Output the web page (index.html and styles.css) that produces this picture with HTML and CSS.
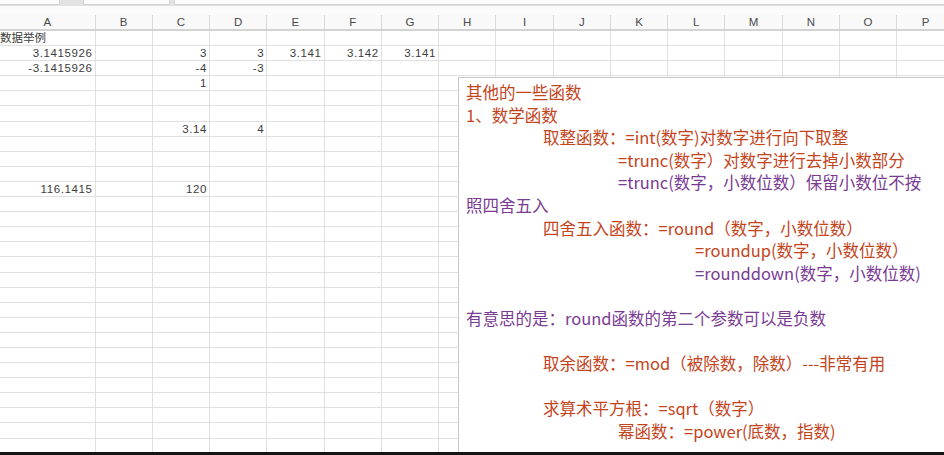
FILE: index.html
```html
<!DOCTYPE html>
<html lang="zh-CN">
<head>
<meta charset="utf-8">
<title>Sheet</title>
<link rel="stylesheet" href="styles.css">
</head>
<body>
<div class="app">
  <div class="tabs">
    <div class="tab tab-1"></div>
    <div class="tab tab-2"></div>
    <div class="tab tab-3"></div>
  </div>
  <div class="gap"></div>
  <div class="sheet-wrap">
    <table class="sheet">
      <colgroup>
        <col class="col-a">
        <col class="col"><col class="col"><col class="col"><col class="col"><col class="col">
        <col class="col"><col class="col"><col class="col"><col class="col"><col class="col">
        <col class="col"><col class="col"><col class="col"><col class="col"><col class="col">
      </colgroup>
      <thead>
        <tr>
          <th>A</th><th>B</th><th>C</th><th>D</th><th>E</th><th>F</th><th>G</th><th>H</th>
          <th>I</th><th>J</th><th>K</th><th>L</th><th>M</th><th>N</th><th>O</th><th>P</th>
        </tr>
      </thead>
      <tbody id="sheet-body"></tbody>
    </table>

    <div class="note">
      <div class="line red">其他的一些函数</div>
      <div class="line red">1、数学函数</div>
      <div class="line red ind-1">取整函数：=int(数字)对数字进行向下取整</div>
      <div class="line red ind-2">=trunc(数字）对数字进行去掉小数部分</div>
      <div class="line purple ind-2">=trunc(数字，小数位数）保留小数位不按</div>
      <div class="line purple">照四舍五入</div>
      <div class="line red ind-1">四舍五入函数：=round（数字，小数位数）</div>
      <div class="line red ind-3">=roundup(数字，小数位数）</div>
      <div class="line purple ind-3">=rounddown(数字，小数位数)</div>
      <div class="line"></div>
      <div class="line purple">有意思的是：round函数的第二个参数可以是负数</div>
      <div class="line"></div>
      <div class="line red ind-1">取余函数：=mod（被除数，除数）---非常有用</div>
      <div class="line"></div>
      <div class="line red ind-1">求算术平方根：=sqrt（数字）</div>
      <div class="line red ind-2">幂函数：=power(底数，指数)</div>
    </div>
  </div>
  <div class="bottom-bar"></div>
</div>
<script src="script.js"></script>
</body>
</html>
```

FILE: styles.css
```css
html, body {
  margin: 0;
  padding: 0;
  background: #ffffff;
}

body {
  width: 944px;
  height: 455px;
  overflow: hidden;
  font-family: "Liberation Sans", "Noto Sans CJK SC", sans-serif;
}

.app {
  display: flex;
  flex-direction: column;
  height: 455px;
}

/* top tab strip */
.tabs {
  height: 6px;
  flex: none;
  display: flex;
  background: #e2e2e2;
}

.tab {
  height: 5px;
  background: #fdfdfd;
  border: 1px solid #d2d2d2;
  border-top: none;
  box-sizing: border-box;
}

.tab-1 { width: 61px; margin-left: -1px; }
.tab-2 { width: 87px; margin-left: 23px; }
.tab-3 { flex: 1; margin-left: 4px; margin-right: -2px; }

.gap {
  height: 9px;
  flex: none;
  background: #fbfbfb;
}

.sheet-wrap {
  flex: 1;
  position: relative;
  overflow: hidden;
}

.sheet {
  border-collapse: collapse;
  table-layout: fixed;
  width: 954px;
  font-size: 11.5px;
  color: #3c3c3c;
}

.col-a { width: 95px; }
.col { width: 57.27px; }

.sheet th {
  height: 13px;
  padding: 1px 0 0;
  font-weight: normal;
  font-size: 11.5px;
  line-height: 13px;
  color: #4a4a4a;
  background: #f9f9f9;
  border-left: 1px solid #d9d9d9;
  border-bottom: 2px solid #d3d3d3;
  text-align: center;
}

.sheet th:first-child {
  border-left: none;
}

.sheet td {
  height: 14.1px;
  padding: 0 2px 0 0;
  line-height: 14px;
  border-left: 1px solid #e0e0e0;
  border-bottom: 1px solid #e0e0e0;
  white-space: nowrap;
  overflow: visible;
  text-align: right;
  letter-spacing: 0.6px;
}

.sheet td:first-child {
  border-left: none;
}

.sheet td.txt {
  text-align: left;
  letter-spacing: 0;
  padding-left: 0;
}

/* floating text box */
.note {
  position: absolute;
  left: 458px;
  top: 62px;
  right: -10px;
  bottom: -10px;
  background: #ffffff;
  border: 1px solid #c8c8c8;
  padding: 3px 0 0 7px;
  font-family: "Noto Sans CJK SC", "Noto Sans", sans-serif;
  font-size: 16.5px;
  font-weight: 400;
  line-height: 22.6px;
}

.line {
  height: 22.6px;
  white-space: nowrap;
}

.red { color: #c4441c; }
.purple { color: #7a3b93; }

.ind-1 { padding-left: 77px; }
.ind-2 { padding-left: 152px; }
.ind-3 { padding-left: 229px; }

.bottom-bar {
  height: 3px;
  flex: none;
  background: #141414;
  position: relative;
  z-index: 2;
}
```

FILE: script.js
```js
(function () {
  var cols = "ABCDEFGHIJKLMNOP".split("");
  var data = {
    1: { A: { v: "数据举例", t: true } },
    2: { A: { v: "3.1415926" }, C: { v: "3" }, D: { v: "3" }, E: { v: "3.141" }, F: { v: "3.142" }, G: { v: "3.141" } },
    3: { A: { v: "-3.1415926" }, C: { v: "-4" }, D: { v: "-3" } },
    4: { C: { v: "1" } },
    7: { C: { v: "3.14" }, D: { v: "4" } },
    11: { A: { v: "116.1415" }, C: { v: "120" } }
  };
  var body = document.getElementById("sheet-body");
  for (var r = 1; r <= 28; r++) {
    var tr = document.createElement("tr");
    for (var c = 0; c < cols.length; c++) {
      var td = document.createElement("td");
      var cell = data[r] && data[r][cols[c]];
      if (cell) {
        td.textContent = cell.v;
        if (cell.t) td.className = "txt";
      }
      tr.appendChild(td);
    }
    body.appendChild(tr);
  }
})();
```
